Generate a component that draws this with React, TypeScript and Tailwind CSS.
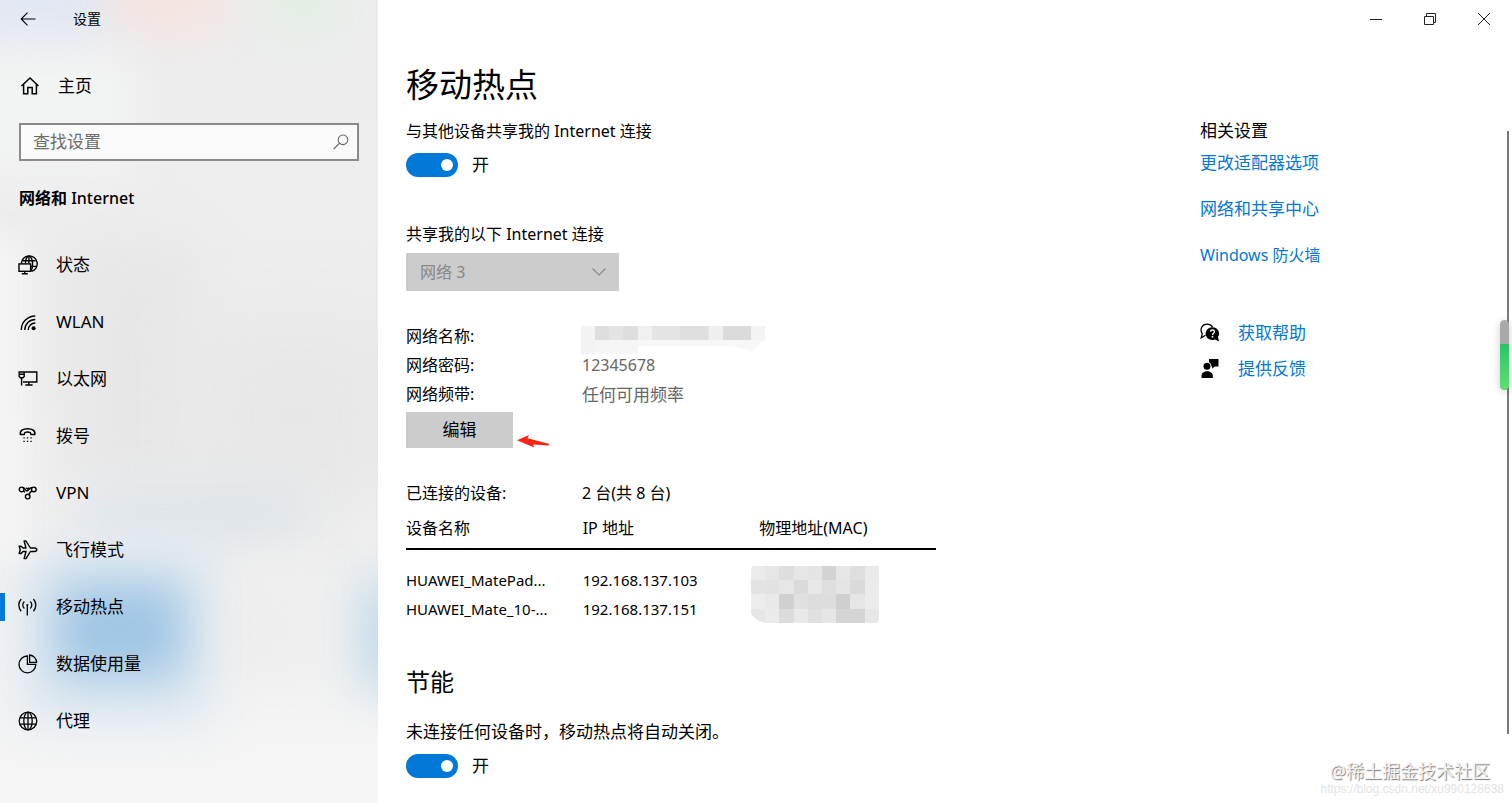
import type { ReactNode } from "react";

const iconProps = {
  width: 20,
  height: 20,
  viewBox: "0 0 20 20",
  fill: "none",
  stroke: "currentColor",
  strokeWidth: 1.3,
  "aria-hidden": true,
};

function StatusIcon() {
  return (
    <svg {...iconProps} strokeWidth={1.4}>
      <path d="M3.4 8.6 A7.9 7.9 0 1 1 13.4 16.4" />
      <path d="M7.4 8.4 C7.6 4.4 9 1.2 10.9 1.2 C13 1.2 14.6 4.8 14.6 8.8 C14.6 11.6 14.1 14 13.2 15.8" />
      <path d="M10.9 1.2 V8.4 M4.4 5.8 H17.6 M13 11.4 H18.2" />
      <rect x="1" y="8.9" width="11.6" height="7.4" />
      <path d="M6.8 16.3 V18.8 M3.8 18.8 H9.8" />
    </svg>
  );
}

function WlanIcon() {
  return (
    <svg {...iconProps} strokeWidth={1.4}>
      <path d="M3.3 18 A14 14 0 0 1 17.3 4" />
      <path d="M6.8 18 A10.5 10.5 0 0 1 17.3 7.5" />
      <path d="M10.3 18 A7 7 0 0 1 17.3 11" />
      <circle cx="15.6" cy="16.2" r="2" fill="currentColor" stroke="none" />
    </svg>
  );
}

function EthernetIcon() {
  return (
    <svg {...iconProps} strokeWidth={1.4}>
      <path d="M6.5 3 H18.8 V13 H5" />
      <path d="M10.8 13 V16 M7.3 16 H14.6" />
      <path d="M1.2 3 H6.2 V7.4 L5 8.8 H2.4 L1.2 7.4 Z M1.2 5.2 H6.2 M3.6 8.8 V16.4" />
    </svg>
  );
}

function DialIcon() {
  return (
    <svg {...iconProps} strokeWidth={1.5}>
      <path
        d="M2.4 8.6 C1.6 4.6 5 2.8 9.6 2.8 C14.2 2.8 17.6 4.6 16.8 8.6 H13 L12.4 6.6 C10.8 6 8.4 6 6.8 6.6 L6.2 8.6 Z"
        strokeLinejoin="round"
      />
      <path
        d="M5.4 11.2h1.3v1.3H5.4z M8.9 11.2h1.3v1.3H8.9z M12.4 11.2h1.3v1.3h-1.3z M5.4 14.7h1.3V16H5.4z M8.9 14.7h1.3V16H8.9z M12.4 14.7h1.3V16h-1.3z"
        fill="currentColor"
        stroke="none"
      />
    </svg>
  );
}

function VpnIcon() {
  return (
    <svg {...iconProps} strokeWidth={1.4}>
      <circle cx="3.6" cy="6.4" r="2.3" />
      <circle cx="15.8" cy="6.4" r="2.3" />
      <circle cx="9.7" cy="13.6" r="2.3" />
      <path d="M5.2 4.8 C6.6 4.6 7 6.4 8 7.4 C8.8 8.2 10 7.8 10.8 6.6 C11.8 5 12.8 4.4 14.2 4.8" />
      <path d="M5.4 8 L7 9.2 M14 8 C12.6 8.4 11.8 9.6 11 11.6" />
      <path d="M8.2 4.8 L9.6 6 L11 4.8" />
    </svg>
  );
}

function AirplaneIcon() {
  return (
    <svg {...iconProps} strokeWidth={1.4}>
      <path
        d="M6.1 1 H8 L12.4 8 H16.4 C17.8 8 18.8 8.9 18.8 9.8 C18.8 10.7 17.8 11.5 16.4 11.5 H12.4 L8 18.6 H6.1 L8 11.5 H5 L3 13.5 H1.2 L2.2 9.8 L1.2 6.2 H3 L5 8 H8 Z"
        strokeLinejoin="round"
      />
    </svg>
  );
}

function HotspotIcon() {
  return (
    <svg {...iconProps}>
      <path d="M9.3 8.6 V18.6" />
      <circle cx="9.3" cy="8" r="1.1" fill="currentColor" stroke="none" />
      <path d="M6.4 11.6 A4.6 4.6 0 0 1 6.4 4.6 M12.2 4.6 A4.6 4.6 0 0 1 12.2 11.6" />
      <path d="M3.2 14.2 A9 9 0 0 1 3.2 2 M15.4 2 A9 9 0 0 1 15.4 14.2" />
    </svg>
  );
}

function DataIcon() {
  return (
    <svg {...iconProps}>
      <path d="M9.4 2 A8.4 8.4 0 1 0 17.8 10.4 H9.4 Z" />
      <path d="M11.6 1 A7.6 7.6 0 0 1 18.6 8.4 H11.6 Z" />
    </svg>
  );
}

function ProxyIcon() {
  return (
    <svg {...iconProps}>
      <circle cx="10" cy="10" r="8.8" />
      <ellipse cx="10" cy="10" rx="4.2" ry="8.8" />
      <path d="M10 1.2 V18.8 M2 6.9 H18 M2 13.1 H18" />
    </svg>
  );
}

const navItems: { label: string; icon: ReactNode; active?: boolean }[] = [
  { label: "状态", icon: <StatusIcon /> },
  { label: "WLAN", icon: <WlanIcon /> },
  { label: "以太网", icon: <EthernetIcon /> },
  { label: "拨号", icon: <DialIcon /> },
  { label: "VPN", icon: <VpnIcon /> },
  { label: "飞行模式", icon: <AirplaneIcon /> },
  { label: "移动热点", icon: <HotspotIcon />, active: true },
  { label: "数据使用量", icon: <DataIcon /> },
  { label: "代理", icon: <ProxyIcon /> },
];

const devices = [
  { name: "HUAWEI_MatePad...", ip: "192.168.137.103" },
  { name: "HUAWEI_Mate_10-...", ip: "192.168.137.151" },
];

// Shades of the censored MAC block, 9 columns by 4 rows
const macShades = [
  ["#ebebeb", "#e6e6e6", "#dedede", "#e6e6e6", "#e4e4e4", "#d3d3d3", "#e6e6e6", "#dfdfdf", "#eaeaea"],
  ["#e3e3e3", "#e2e2e2", "#e6e6e6", "#dadada", "#e8e8e8", "#dfdfdf", "#e5e5e5", "#dadada", "#ebebeb"],
  ["#ededed", "#e9e9e9", "#d0d0d0", "#e0e0e0", "#dcdcdc", "#dddddd", "#cfcfcf", "#e6e6e6", "#ebebeb"],
  ["#e6e6e6", "#ebebeb", "#dcdcdc", "#e9e9e9", "#e0e0e0", "#e6e6e6", "#d5d5d5", "#d5d5d5", "#e7e7e7"],
];

function Toggle({ id }: { id: string }) {
  return (
    <div className="mt-2.5 flex h-6 items-center gap-3.5">
      <input
        id={id}
        type="checkbox"
        role="switch"
        defaultChecked
        className="flex h-6 w-[52px] appearance-none items-center rounded-full bg-gray-400 px-[5px] before:size-3 before:rounded-full before:bg-white checked:justify-end checked:bg-[#0078d7]"
      />
      <label htmlFor={id} className="text-[17px]">
        开
      </label>
    </div>
  );
}

function Backdrop() {
  return (
    <div className="absolute inset-0 -z-10 overflow-hidden bg-linear-to-b from-[#ededee] via-[#eeeeee] to-[#f6f6f6]">
      <div className="absolute -top-8 -left-8 h-20 w-36 bg-[#e1e7f3] blur-xl" />
      <div className="absolute -top-8 left-28 h-16 w-28 bg-[#f6e3df] blur-xl" />
      <div className="absolute -top-8 left-[270px] h-16 w-16 bg-[#e1efe1] blur-xl" />
      <div className="absolute top-12 -left-6 h-32 w-40 bg-[#f2f3f3] blur-xl" />
      <div className="absolute top-60 left-16 h-60 w-32 bg-[#e7e7e7] blur-xl" />
      <div className="absolute top-80 left-48 h-48 w-52 bg-[#e7e7e7] blur-2xl" />
      <div className="absolute top-[490px] left-20 h-12 w-56 bg-[#dde4ea] blur-xl" />
      <div className="absolute top-[570px] left-[215px] h-28 w-28 bg-[#eeeeee] blur-xl" />
      <div className="absolute top-[550px] left-5 h-44 w-48 bg-[#dfe9f1] blur-xl" />
      <div className="absolute top-[582px] left-14 h-24 w-32 bg-[#9fc5e4] blur-xl" />
      <div className="absolute top-[580px] left-[360px] h-28 w-16 bg-[#bfd8e9] blur-xl" />
      <div className="absolute top-60 -left-6 h-80 w-12 bg-[#f5f5f5] blur-lg" />
    </div>
  );
}

function Sidebar() {
  return (
    <aside className="relative isolate w-1/4 shrink-0">
      <Backdrop />
      <div className="flex h-[38px] items-center gap-9 pl-[19px]">
        <button type="button" aria-label="返回">
          <svg {...iconProps} width={18} height={18} viewBox="0 0 18 18" strokeWidth={1.1}>
            <path d="M16.5 9 H2.2 M8.5 2.7 L2.2 9 L8.5 15.3" />
          </svg>
        </button>
        <span className="text-sm">设置</span>
      </div>

      <a href="#home" className="mt-7 flex h-10 items-center gap-[18px] pl-5 text-[17px]">
        <svg {...iconProps} strokeWidth={1.5}>
          <path d="M1.5 10 L10 2 L18.5 10 M3.6 8.4 V17.8 H7.8 V11.4 H12.2 V17.8 H16.4 V8.4" />
        </svg>
        主页
      </a>

      <div className="mx-[19px] mt-[17px] flex h-[38px] items-center border-2 border-[#8a8a8a] bg-[#fafafa] pr-2 pl-3">
        <input
          type="text"
          aria-label="查找设置"
          placeholder="查找设置"
          className="min-w-0 flex-1 bg-transparent text-[17px] outline-none placeholder:text-[#6b6b6b]"
        />
        <svg {...iconProps} width={16} height={16} viewBox="0 0 16 16" strokeWidth={1.1} className="text-[#666]">
          <circle cx="10" cy="5.8" r="4.8" />
          <path d="M6.6 9.2 L0.8 15" />
        </svg>
      </div>

      <h2 className="mt-[25px] pl-[19px] text-base leading-6 font-bold">
        网络和 <span className="font-medium">Internet</span>
      </h2>

      <nav className="mt-[26px]">
        {navItems.map((item) => (
          <a key={item.label} href="#nav" className="flex h-[57px] items-center text-[17px]">
            <span className={item.active ? "h-7 w-[5px] bg-[#0078d7]" : "h-7 w-[5px]"} />
            <span className="ml-[13px] mr-[18px]">{item.icon}</span>
            {item.label}
          </a>
        ))}
      </nav>
    </aside>
  );
}

function WindowControls() {
  return (
    <div className="flex h-[38px] justify-end pr-px text-[#222]">
      <button type="button" aria-label="最小化" className="flex w-[54px] items-center justify-center">
        <svg {...iconProps} width={14} height={14} viewBox="0 0 14 14" strokeWidth={1}>
          <path d="M1 7.5 H13" />
        </svg>
      </button>
      <button type="button" aria-label="还原" className="flex w-[54px] items-center justify-center">
        <svg {...iconProps} width={14} height={14} viewBox="0 0 14 14" strokeWidth={1}>
          <path d="M1.5 4.5 H10.5 V12.5 H1.5 Z M3.5 4.5 V1.5 H12.5 V10.5 H10.5" />
        </svg>
      </button>
      <button type="button" aria-label="关闭" className="flex w-[54px] items-center justify-center">
        <svg {...iconProps} width={14} height={14} viewBox="0 0 14 14" strokeWidth={1}>
          <path d="M1 1 L13 13 M13 1 L1 13" />
        </svg>
      </button>
    </div>
  );
}

function HotspotSettings() {
  return (
    <section className="min-w-0 flex-1">
      <h1 className="mt-[25px] text-[33px] leading-[44px]">移动热点</h1>
      <p className="mt-3 text-base leading-6">与其他设备共享我的 Internet 连接</p>
      <Toggle id="share" />

      <label htmlFor="source" className="mt-[45px] block text-base leading-6">
        共享我的以下 Internet 连接
      </label>
      <div className="relative mt-[7px] w-[213px]">
        <select
          id="source"
          disabled
          className="block h-[38px] w-full appearance-none bg-[#ccc] px-3.5 text-base text-[#868686] opacity-100"
        >
          <option>网络 3</option>
        </select>
        <svg
          {...iconProps}
          width={16}
          height={10}
          viewBox="0 0 16 10"
          strokeWidth={1.1}
          className="pointer-events-none absolute top-3.5 right-3 text-[#868686]"
        >
          <path d="M1.5 1.5 L8 8 L14.5 1.5" />
        </svg>
      </div>

      <dl className="mt-[31px] grid grid-cols-[176px_1fr] text-base leading-[29px]">
        <dt>网络名称:</dt>
        <dd className="h-[29px]">
          <svg width="184" height="28" viewBox="0 0 184 28" className="mt-1 -ml-px" aria-hidden="true">
            <path d="M0 0 H184 V13 L172 25 L150 20 H57 V28 L0 29 Z" fill="#f7f7f7" />
            <rect width="14" height="28" fill="#f3f3f3" />
            <rect x="14" y="14" width="43" height="12" fill="#f5f5f5" />
            <rect x="14" width="43" height="14" fill="#dedede" />
            <rect x="28" width="14" height="14" fill="#e4e4e4" />
            <rect x="57" width="14" height="14" fill="#f0f0f0" />
            <rect x="71" width="57" height="14" fill="#e4e4e4" />
            <rect x="99" width="28" height="14" fill="#dfdfdf" />
            <rect x="128" width="14" height="14" fill="#efefef" />
            <rect x="142" width="28" height="14" fill="#dbdbdb" />
            <rect x="170" width="14" height="14" fill="#f3f3f3" />
          </svg>
        </dd>
        <dt>网络密码:</dt>
        <dd className="text-[#666]">12345678</dd>
        <dt>网络频带:</dt>
        <dd className="text-[17px] text-[#666]">任何可用频率</dd>
      </dl>
      <div className="mt-[3px] flex gap-1">
        <button type="button" className="h-9 w-[107px] bg-[#ccc] text-[17px]">
          编辑
        </button>
        <svg width="34" height="14" viewBox="0 0 34 14" className="mt-[22px]" aria-hidden="true">
          <path d="M0 6.2 L12 1 L10.5 4.2 L32.5 10 L32 11.6 L16 10.6 L17.4 13.6 Z" fill="#fa2314" />
        </svg>
      </div>

      <dl className="mt-[31px] grid grid-cols-[176px_1fr] text-base leading-[29px]">
        <dt>已连接的设备:</dt>
        <dd>2 台(共 8 台)</dd>
      </dl>
      <table className="w-[530px] max-w-full table-fixed text-left text-base">
        <thead>
          <tr className="h-[41px] border-b-2 border-black">
            <th className="w-1/3 font-normal">设备名称</th>
            <th className="w-1/3 font-normal">IP 地址</th>
            <th className="w-1/3 font-normal">物理地址(MAC)</th>
          </tr>
        </thead>
        <tbody className="text-[15px] before:block before:h-4">
          {devices.map((device, i) => (
            <tr key={device.ip} className="h-[29px]">
              <td>{device.name}</td>
              <td>{device.ip}</td>
              {i === 0 && (
                <td rowSpan={2} className="align-top">
                  <svg width="128" height="57" viewBox="0 0 128 57" className="-ml-2" aria-hidden="true">
                    <clipPath id="mac">
                      <path d="M0 3 Q0 0 3 0 H128 V53 Q128 57 124 57 H14 Q4 54 0 48 Z" />
                    </clipPath>
                    <g clipPath="url(#mac)" shapeRendering="crispEdges">
                      {macShades.map((row, y) =>
                        row.map((shade, x) => (
                          <rect
                            key={`${x}-${y}`}
                            x={x * 14.2}
                            y={y * 14.2}
                            width="14.5"
                            height="14.5"
                            fill={shade}
                          />
                        )),
                      )}
                    </g>
                  </svg>
                </td>
              )}
            </tr>
          ))}
        </tbody>
      </table>

      <h2 className="mt-[42px] text-2xl">节能</h2>
      <p className="mt-[22px] text-[17px] leading-6">未连接任何设备时，移动热点将自动关闭。</p>
      <Toggle id="saving" />
    </section>
  );
}

function RelatedSettings() {
  return (
    <aside className="w-[312px] shrink-0 pt-[81px] text-[17px] leading-6">
      <h2>相关设置</h2>
      <div className="mt-2 flex flex-col items-start gap-[22px] text-[#0078d7]">
        <a href="#adapter">更改适配器选项</a>
        <a href="#sharing">网络和共享中心</a>
        <a href="#firewall" className="text-base leading-6">
          Windows 防火墙
        </a>
      </div>
      <div className="mt-[54px] flex flex-col items-start gap-3">
        <div className="flex items-center gap-[18px]">
          <svg {...iconProps}>
            <path d="M5.6 12.2 L1.2 14.8 L2.3 10.8 C-0.6 6.2 2 1.2 7 1.2 C9.6 1.2 11.6 2.4 12.6 4.2" />
            <path
              d="M12.4 4.2 A6.6 6.4 0 0 1 18 14 L19 18.6 L15 16.4 A6.6 6.4 0 1 1 12.4 4.2 Z"
              fill="currentColor"
              stroke="none"
            />
            <path d="M10.6 8.8 C10.6 6.4 14.4 6.4 14.4 8.8 C14.4 10.3 12.5 10.2 12.5 12" stroke="#fff" />
            <circle cx="12.5" cy="13.7" r="0.9" fill="#fff" stroke="none" />
          </svg>
          <a href="#help" className="text-[#0078d7]">
            获取帮助
          </a>
        </div>
        <div className="flex items-center gap-[18px]">
          <svg {...iconProps} fill="currentColor" stroke="none">
            <path d="M9 0 H18.5 V7.4 H14.8 L12.2 9.8 V7.4 H9 Z" />
            <circle cx="7" cy="7.2" r="4.4" fill="#fff" />
            <circle cx="7" cy="7.2" r="3.5" />
            <path d="M1.5 19 V16.8 C1.5 10.6 12.8 10.6 12.8 16.8 V19 Z" />
          </svg>
          <a href="#feedback" className="text-[#0078d7]">
            提供反馈
          </a>
        </div>
      </div>
    </aside>
  );
}

export default function App() {
  return (
    <div className="relative flex min-h-screen overflow-hidden bg-white font-['Noto_Sans','Noto_Sans_CJK_SC',sans-serif] text-black">
      <Sidebar />
      <main className="flex min-w-0 flex-1 flex-col">
        <WindowControls />
        <div className="flex pl-7">
          <HotspotSettings />
          <RelatedSettings />
        </div>
      </main>

      {/* Scrollbar with the battery pill floating over it */}
      <div className="absolute top-[131px] right-[3px] h-[603px] w-0.5 bg-[#7a7a7a]" />
      <div className="absolute top-80 right-[3px] h-[70px] w-[9px] overflow-hidden rounded-full bg-[#a9a9a9] pt-6 shadow-[0_2px_8px_rgba(0,0,0,0.2)]">
        <div className="h-full bg-linear-to-b from-[#22c468] to-[#5ee070]" />
      </div>

      {/* Watermarks */}
      <div className="absolute right-[22px] bottom-5 text-lg leading-6 text-[#f2f2f2] [text-shadow:1px_1px_1px_#777]">
        @稀土掘金技术社区
      </div>
      <div className="absolute right-2 bottom-1.5 font-['Liberation_Sans',sans-serif] text-xs leading-4 text-[#e3e3e3]">
        https://blog.csdn.net/xu990128638
      </div>
    </div>
  );
}
